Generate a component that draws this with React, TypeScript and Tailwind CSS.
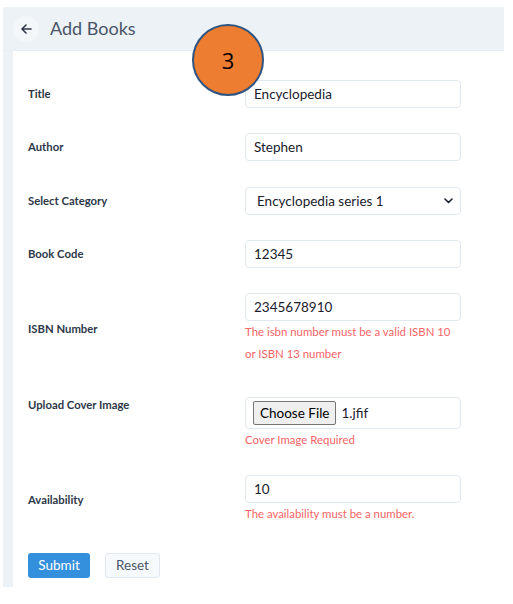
import React from "react";

const font = { fontFamily: "Lato, 'Open Sans', sans-serif" };

function Label({ children }: { children: React.ReactNode }) {
  return (
    <div className="w-[217px] shrink-0 text-[11.3px] font-bold text-[#2d3748]">{children}</div>
  );
}

function Input({ value }: { value: string }) {
  return (
    <div className="w-[216px] h-[28px] border border-[#e2e8f0] rounded-[4px] flex items-center pl-[8px] text-[13.5px] text-[#1a202c]">
      {value}
    </div>
  );
}

function Err({ children }: { children: React.ReactNode }) {
  return <div className="text-[11.4px] leading-[22px] text-[#f56565]">{children}</div>;
}

export default function App() {
  return (
    <div className="w-[513px] h-[604px] bg-white pt-[7px] pl-[3px] relative" style={font}>
      <div className="w-[501px] h-[580px] bg-[#edf2f7] flex flex-col">
        <div className="h-[44px] shrink-0 flex items-center pl-[10px] border-b border-[#e8edf3]">
          <div className="w-[26px] h-[26px] rounded-full bg-[#f4f7fa] flex items-center justify-center">
            <svg width="11" height="10" viewBox="0 0 11 10" fill="none">
              <path d="M10 5H1.5M5 1L1 5l4 4" stroke="#2d3748" strokeWidth="1.6" strokeLinecap="round" strokeLinejoin="round" />
            </svg>
          </div>
          <div className="ml-[11px] text-[18px] text-[#4a5568]">Add Books</div>
        </div>
        <div className="ml-[10px] flex-1 bg-white pl-[15px] pt-[29px] flex flex-col">
          <div className="flex items-center">
            <Label>Title</Label>
            <Input value="Encyclopedia" />
          </div>
          <div className="flex items-center mt-[25px]">
            <Label>Author</Label>
            <Input value="Stephen" />
          </div>
          <div className="flex items-center mt-[26px]">
            <Label>Select Category</Label>
            <div className="w-[216px] h-[28px] border border-[#e2e8f0] rounded-[4px] flex items-center pl-[11px] pr-[7px] text-[13.5px] text-[#1a202c]">
              <span className="flex-1">Encyclopedia series 1</span>
              <svg width="9" height="6" viewBox="0 0 9 6" fill="none">
                <path d="M1 1l3.5 3.5L8 1" stroke="#1a202c" strokeWidth="1.6" strokeLinecap="round" strokeLinejoin="round" />
              </svg>
            </div>
          </div>
          <div className="flex items-center mt-[25px]">
            <Label>Book Code</Label>
            <Input value="12345" />
          </div>
          <div className="flex items-center mt-[25px]">
            <Label>ISBN Number</Label>
            <div className="flex flex-col">
              <Input value="2345678910" />
              <Err>The isbn number must be a valid ISBN 10</Err>
              <Err>or ISBN 13 number</Err>
            </div>
          </div>
          <div className="flex items-start mt-[32px]">
            <Label>Upload Cover Image</Label>
            <div className="flex flex-col">
              <div className="w-[216px] h-[32px] border border-[#e2e8f0] rounded-[4px] flex items-center pl-[7px] text-[13.5px] text-[#1a202c]">
                <div className="h-[24px] px-[6px] bg-[#efefef] border border-[#767676] rounded-[2px] flex items-center text-[13.5px] text-black">
                  Choose File
                </div>
                <span className="ml-[5px]">1.jfif</span>
              </div>
              <Err>Cover Image Required</Err>
            </div>
          </div>
          <div className="flex items-center mt-[24px]">
            <Label>Availability</Label>
            <div className="flex flex-col">
              <Input value="10" />
              <Err>The availability must be a number.</Err>
            </div>
          </div>
          <div className="flex items-center mt-[28px] gap-[15px]">
            <div className="w-[62px] h-[25px] rounded-[3px] bg-[#3490dc] text-white text-[13.5px] flex items-center justify-center">
              Submit
            </div>
            <div className="w-[55px] h-[25px] rounded-[3px] bg-[#f7fafc] border border-[#e2e8f0] text-[#4a5568] text-[13.5px] flex items-center justify-center">
              Reset
            </div>
          </div>
        </div>
      </div>
      <div
        className="absolute left-[192px] top-[24px] w-[72px] h-[72px] rounded-full bg-[#ed7d31] border-2 border-[#2e5480] flex items-center justify-center text-[22px] text-black"
        style={{ fontFamily: "'Open Sans', sans-serif" }}
      >
        3
      </div>
    </div>
  );
}
